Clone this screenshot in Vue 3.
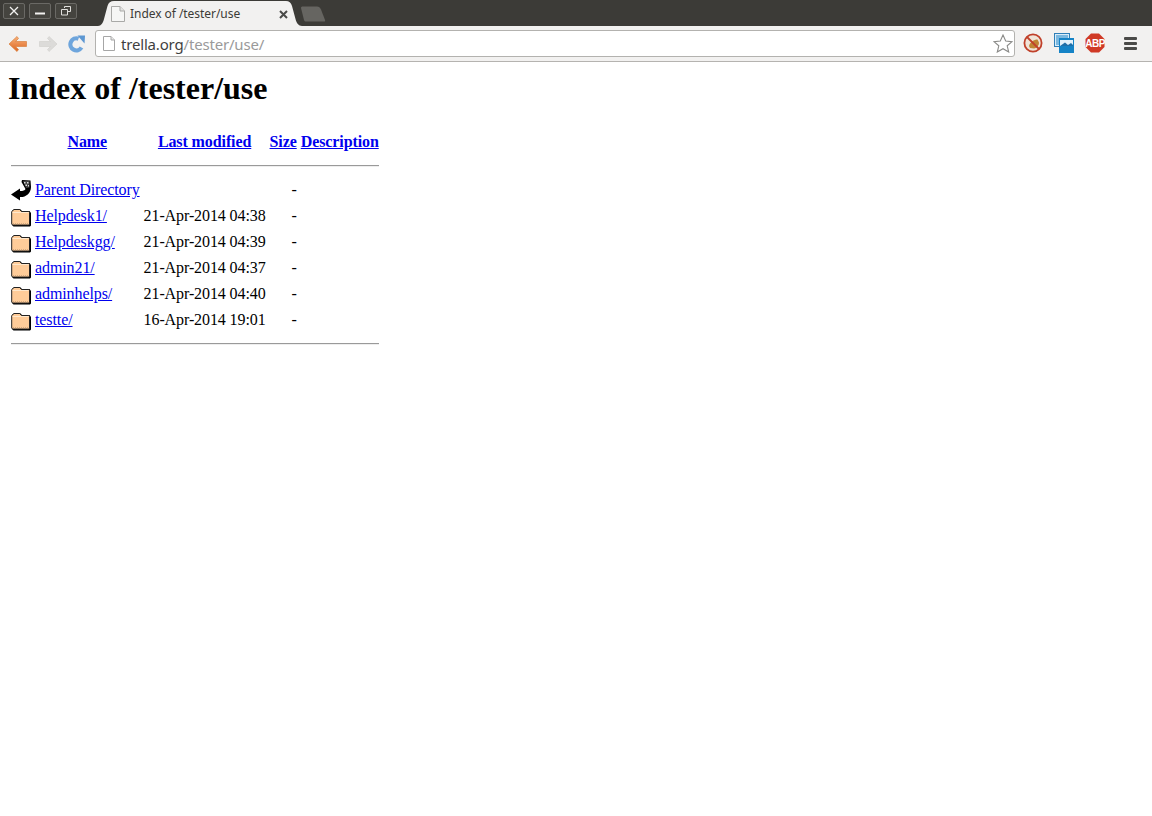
<script setup>
const rows = [
  { icon: 'back', name: 'Parent Directory', date: '' },
  { icon: 'dir', name: 'Helpdesk1/', date: '21-Apr-2014 04:38' },
  { icon: 'dir', name: 'Helpdeskgg/', date: '21-Apr-2014 04:39' },
  { icon: 'dir', name: 'admin21/', date: '21-Apr-2014 04:37' },
  { icon: 'dir', name: 'adminhelps/', date: '21-Apr-2014 04:40' },
  { icon: 'dir', name: 'testte/', date: '16-Apr-2014 19:01' }
]
</script>

<template>
  <div class="browser">
    <div class="tabstrip">
      <div class="winbtns">
        <button class="winbtn">
          <svg width="12" height="12" viewBox="0 0 12 12"><path d="M2 2 10 10M10 2 2 10" stroke="#f2f1f0" stroke-width="1.300" fill="none"/></svg>
        </button>
        <button class="winbtn">
          <svg width="12" height="12" viewBox="0 0 12 12"><path d="M1 8.500H11" stroke="#f2f1f0" stroke-width="2" fill="none"/></svg>
        </button>
        <button class="winbtn">
          <svg width="12" height="12" viewBox="0 0 12 12"><path d="M4.500 3V1.500H10.500V6.500H8M1.500 4.500H7.500V10H1.500Z" stroke="#e0dfdc" stroke-width="1" fill="none"/></svg>
        </button>
      </div>
      <div class="tab">
        <svg class="tabshape" width="204" height="26" viewBox="0 0 204 26"><path d="M0 26C3 26 5 23 6 19L9.500 6C10.500 2.500 12.500 1 16 1H188C191 1 193 2.500 194 6L197.500 19C198.500 23 200.500 26 204 26Z" fill="#f2f1f0"/></svg>
        <svg class="page" width="14" height="16" viewBox="0 0 14 16"><path d="M.5.500H9L13.500 5V15.500H.5Z" fill="#f6f6f5" stroke="#a9a9a7"/><path d="M9 .5V5H13.500" fill="#e3e3e1" stroke="#a9a9a7"/></svg>
        <span class="tabtitle">Index of /tester/use</span>
        <svg class="tabclose" width="9" height="9" viewBox="0 0 9 9"><path d="M1 1 8 8M8 1 1 8" stroke="#4a4a48" stroke-width="2" fill="none"/></svg>
      </div>
      <svg class="newtab" width="26" height="16" viewBox="0 0 26 16"><path d="M1 2C1 1 1.500 .5 3 .5H17C19 .5 20 1.500 21 3.500L25 14C25.300 15 25 15.500 24 15.500H6C5 15.500 4.500 15 4 14Z" fill="#666561"/></svg>
    </div>

    <div class="toolbar">
      <div class="navbtns">
        <svg width="20" height="18" viewBox="0 0 20 18">
          <defs><linearGradient id="bk" x1="0" y1="0" x2="0" y2="1"><stop offset="0" stop-color="#f8b27a"/><stop offset="1" stop-color="#dd6420"/></linearGradient></defs>
          <path d="M9 1.500 1 9 9 16.500 10.500 14.500 7.500 11.500H18.500V6.500H7.500L10.500 3.500Z" fill="url(#bk)" stroke="#d9813f" stroke-width=".7"/>
        </svg>
        <svg width="20" height="18" viewBox="0 0 20 18"><path d="M11 1.500 19 9 11 16.500 9.500 14.500 12.500 11.500H1.500V6.500H12.500L9.500 3.500Z" fill="#dcdbd9" stroke="#d2d1cf" stroke-width=".7"/></svg>
        <svg width="18" height="18" viewBox="0 0 18 18">
          <path d="M13.500 12.500A6 6 0 1 1 10.500 3.700" fill="none" stroke="#6ea5dc" stroke-width="4.200"/>
          <path d="M9.500 .5 17 .5 16.500 8.500Z" fill="#5d97d2"/>
        </svg>
      </div>
      <div class="omnibox">
        <svg class="urlpage" width="12" height="15" viewBox="0 0 12 15"><path d="M.5.500H8L11.500 4V14.500H.5Z" fill="#fff" stroke="#a6a6a6"/><path d="M8 .5V4H11.500" fill="#e8e8e8" stroke="#a6a6a6"/></svg>
        <span class="url"><span class="host">trella.org</span><span class="path">/tester/use/</span></span>
        <svg class="star" width="20" height="19" viewBox="0 0 20 19"><path d="M10 1 12.700 7 19 7.600 14.200 11.800 15.700 18 10 14.700 4.300 18 5.800 11.800 1 7.600 7.300 7Z" fill="#fff" stroke="#8a8a88" stroke-width="1.100"/></svg>
      </div>
      <div class="extensions">
        <svg width="20" height="20" viewBox="0 0 20 20">
          <circle cx="10" cy="10" r="8.600" fill="#f0e4d8" stroke="#c0402a" stroke-width="1.800"/>
          <path d="M6 13C7 9 11 6.500 14.500 6.500L16 9.500C16 12.500 14 15 11 15.500L7 15Z" fill="#c08434"/>
          <path d="M4 4 16 16" stroke="#c0402a" stroke-width="1.800"/>
        </svg>
        <svg width="20" height="20" viewBox="0 0 20 20">
          <rect x=".5" y=".5" width="15" height="13" fill="#d8ecf8" stroke="#2f7fb8"/>
          <rect x="2" y="2" width="12" height="10" fill="#7ab8e0"/>
          <rect x="5" y="5" width="15" height="15" fill="#1583c6"/>
          <rect x="6" y="7" width="13" height="6" fill="#e3f1fa"/>
          <path d="M6 13 11 9.500 14 12 17 10 19 12V13Z" fill="#1f6fa8"/>
        </svg>
        <svg width="20" height="20" viewBox="0 0 20 20">
          <path d="M6 .500H14L19.500 6V14L14 19.500H6L.5 14V6Z" fill="#d03a26"/>
          <text x="10" y="14" text-anchor="middle" class="abp">ABP</text>
        </svg>
        <div class="menu"><i></i><i></i><i></i></div>
      </div>
    </div>

    <main class="page-body">
      <h1>Index of /tester/use</h1>
      <table>
        <thead>
          <tr>
            <th></th>
            <th class="headcell"><a href="#">Name</a></th>
            <th class="headcell"><a href="#">Last modified</a></th>
            <th class="headcell"><a href="#">Size</a></th>
            <th class="headcell"><a href="#">Description</a></th>
          </tr>
          <tr><th colspan="5"><hr></th></tr>
        </thead>
        <tbody>
          <tr v-for="r in rows" :key="r.name">
            <td class="iconcell">
              <svg v-if="r.icon === 'back'" width="20" height="22" viewBox="0 0 20 22">
                <path d="M0 15.500 9 9.500V12C12 12 14 11.500 14.500 10L10.500 3 11 1 19.500 1.500 20 8C20 15 14 18.500 9 18V21.500Z" fill="#000"/>
                <path d="M12 2H18.500V8.500L15 9Z" fill="#444"/>
                <path d="M13 3H14.500V4.500H13ZM16 3H17.500V4.500H16ZM14.500 5.500H16V7H14.500ZM17 6H18V7.500H17Z" fill="#ddd"/>
              </svg>
              <svg v-else width="20" height="22" viewBox="0 0 20 22">
                <path d="M2.500 21.500H19L20 20.500V8L18.500 6H11L9 4H3.500L1 6V20Z" fill="#000"/>
                <path d="M1.500 20H17.500C18 20 18.500 19.500 18.500 19V7.500L17.500 6.500H10.500L8.500 4.500H3L.7 6.500V19Z" fill="#fc9" stroke="#222" stroke-width="1"/>
                <path d="M1.500 7.500H17.500" stroke="#ffe8cc" stroke-width="1" fill="none"/>
                <path d="M2 19H18" stroke="#a86" stroke-dasharray="1 1" stroke-width="1"/>
              </svg>
            </td>
            <td><a href="#">{{ r.name }}</a></td>
            <td>{{ r.date }}</td>
            <td class="size">-</td>
            <td></td>
          </tr>
          <tr><th colspan="5"><hr></th></tr>
        </tbody>
      </table>
    </main>
  </div>
</template>

<style>
html, body { margin: 0; background: #fff; }
</style>

<style scoped>
.browser { width: 1152px; min-height: 816px; background: #fff; }

.tabstrip {
  height: 26px;
  background: #3c3b37;
  display: flex;
  align-items: flex-start;
  box-sizing: border-box;
}
.winbtns { display: flex; gap: 4px; padding: 3px 0 0 3px; width: 98px; box-sizing: border-box; }
.winbtn {
  width: 22px; height: 16px; padding: 0; margin: 0;
  border: 1px solid #6a6965; border-radius: 2px;
  background: #45443f;
  display: flex; align-items: center; justify-content: center;
}
.tab {
  position: relative;
  width: 204px; height: 26px;
  display: flex; align-items: center;
  box-sizing: border-box;
  padding: 2px 0 0 13px;
  font: 12px/16px "Noto Sans", sans-serif;
  color: #3c3b37;
}
.tabshape { position: absolute; left: 0; top: 0; }
.page { position: relative; flex: none; }
.tabtitle { position: relative; margin-left: 5px; width: 148px; white-space: nowrap; letter-spacing: -.05px; }
.tabclose { position: relative; margin-left: 1px; }
.newtab { margin: 6px 0 0 -2px; }

.toolbar {
  height: 36px;
  background: #f2f1f0;
  border-bottom: 1px solid #b5b3b0;
  box-sizing: border-box;
  display: flex;
  align-items: flex-start;
}
.navbtns { display: flex; align-items: center; gap: 10px; width: 95px; padding: 9px 0 0 8px; box-sizing: border-box; }
.omnibox {
  width: 920px; height: 27px;
  margin-top: 4px;
  box-sizing: border-box;
  background: #fff;
  border: 1px solid #b3b2af;
  border-radius: 3px;
  display: flex; align-items: center;
  padding: 0 1px 0 7px;
}
.urlpage { flex: none; }
.url {
  margin-left: 6px; flex: 1;
  font: 15px/20px "Noto Sans", sans-serif;
  letter-spacing: -.18px;
  white-space: nowrap;
}
.host { color: #3f3f3f; }
.path { color: #9a9a9a; }
.extensions { display: flex; align-items: center; padding: 7px 0 0 8px; }
.extensions > svg { margin-right: 11px; flex: none; }
.abp { font: bold 10px "Liberation Sans", sans-serif; letter-spacing: -.5px; fill: #fff; }
.menu { display: flex; flex-direction: column; gap: 2px; width: 13px; margin-left: 8px; }
.menu i { display: block; height: 3px; background: #4a4a48; border-radius: 1px; }

.page-body {
  padding: 8px;
  font: 16px "Liberation Serif", "Times New Roman", serif;
  letter-spacing: -.1px;
  color: #000;
}
h1 { font-size: 32px; font-weight: bold; margin: 0 0 23px; letter-spacing: 0; }
a { color: #00e; text-decoration: underline; }
.headcell { padding-bottom: 3px; }
.iconcell { line-height: 0; }
.size { text-align: right; }
hr { margin: 8px 0; border: 0; border-top: 1px solid #9a9a9a; border-bottom: 1px solid #eee; }
</style>
